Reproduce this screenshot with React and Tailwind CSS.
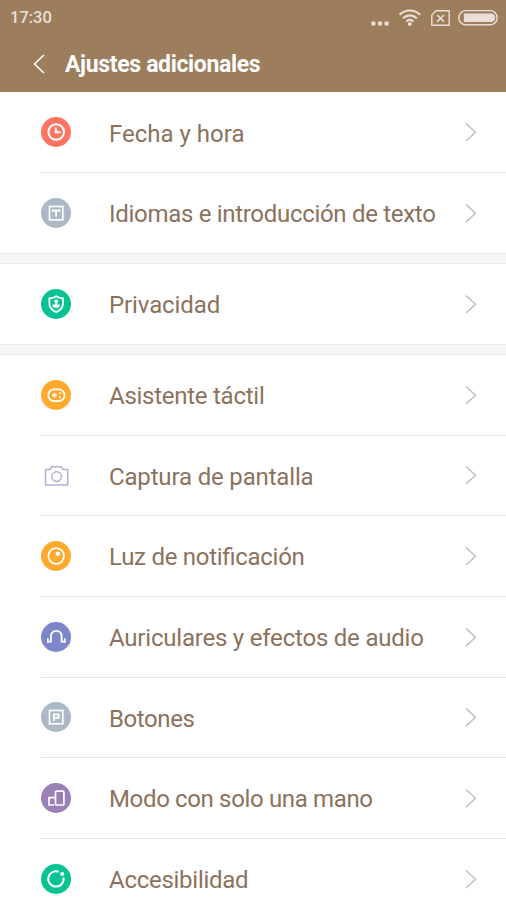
/**
 * Additional settings screen - status bar, title bar and grouped list
 */
import React from 'react';

// Every glyph is drawn on the same 30px disc
function Disc({ color, children }) {
  return (
    <svg width="30" height="30" viewBox="0 0 30 30" fill="none" stroke="#fff" strokeWidth="2">
      <circle cx="15" cy="15" r="15" fill={color} stroke="none" />
      {children}
    </svg>
  );
}

const ClockIcon = () => (
  <Disc color="#fb7562">
    <circle cx="15.2" cy="15" r="7.8" />
    <path d="M14.8 10.5V15.3H19.5" />
  </Disc>
);

const TextIcon = () => (
  <Disc color="#abb8c6">
    <rect x="8.5" y="8.5" width="13.3" height="13.3" strokeWidth="1.7" />
    <path d="M11.8 14V12.4H18.4V14M15.1 12.4V18.8" strokeWidth="1.8" />
  </Disc>
);

const ShieldIcon = () => (
  <Disc color="#06c294">
    <path d="M15.2 7.2C17.3 8.6 19.5 9.2 22 9.4V14.5C22 18.8 19 21.5 15.2 23.2C11.4 21.5 8.4 18.8 8.4 14.5V9.4C10.9 9.2 13.1 8.6 15.2 7.2Z" strokeWidth="1.8" />
    <circle cx="15.2" cy="12.2" r="1.9" fill="#fff" stroke="none" />
    <path d="M14.2 13H16.2V15.6H18.8V17.5L17.4 18.8H13L11.6 17.5V15.6H14.2Z" fill="#fff" stroke="none" />
  </Disc>
);

const GamepadIcon = () => (
  <Disc color="#ffa92f">
    <rect x="7.3" y="9.4" width="16.2" height="11.6" rx="5.6" strokeWidth="1.8" />
    <path d="M11 15.2H16M13.5 12.7V17.7" strokeWidth="1.7" />
    <circle cx="19" cy="13.2" r="1" fill="#fff" stroke="none" />
    <circle cx="19" cy="17.2" r="1" fill="#fff" stroke="none" />
  </Disc>
);

const CameraIcon = () => (
  <svg width="30" height="30" viewBox="0 0 30 30" fill="none" stroke="#b9aad3" strokeWidth="1.5">
    <path d="M4.5 9.5H9L10.6 6.8H20.6L22.2 9.5H26.7V25.1H4.5Z" strokeLinejoin="round" />
    <circle cx="15.6" cy="16.6" r="4.8" />
  </svg>
);

const LightIcon = () => (
  <Disc color="#ffa92f">
    <circle cx="15.2" cy="15" r="7.8" strokeWidth="1.8" />
    <circle cx="16.8" cy="12.8" r="2.3" fill="#fff" stroke="none" />
  </Disc>
);

const HeadphonesIcon = () => (
  <Disc color="#7c86c8">
    <path d="M6.8 20.5V16.2M23.8 20.5V16.2" strokeWidth="1.6" />
    <path d="M6 19.7H10V14.5C10 11 12 8.9 15.3 8.9C18.6 8.9 20.6 11 20.6 14.5V19.7H24.6" strokeWidth="1.8" />
  </Disc>
);

const ButtonsIcon = () => (
  <Disc color="#abb8c6">
    <rect x="8.5" y="8.5" width="13.3" height="13.3" strokeWidth="1.7" />
    <path d="M13 19V12.4H17.6V15.9H13" strokeWidth="1.8" />
  </Disc>
);

const OneHandIcon = () => (
  <Disc color="#9a80b6">
    <rect x="14.5" y="8.2" width="8.4" height="13.8" rx="1" strokeWidth="1.7" />
    <path d="M14.5 14.7H8V22H13" strokeWidth="1.7" />
  </Disc>
);

const AccessibilityIcon = () => (
  <Disc color="#06c294">
    <path d="M17.6 7.7A7.7 7.7 0 1 0 22.5 13.5" />
    <circle cx="21.2" cy="10" r="2.1" fill="#fff" stroke="none" />
  </Disc>
);

const GROUPS = [
  {
    rowHeight: 'h-[80.5px]',
    items: [
      { id: 'date', label: 'Fecha y hora', icon: ClockIcon, text: 'pt-1 tracking-normal' },
      { id: 'language', label: 'Idiomas e introducción de texto', icon: TextIcon, text: 'pt-[3px] tracking-[-0.3px]' },
    ],
  },
  {
    rowHeight: 'h-20',
    items: [{ id: 'privacy', label: 'Privacidad', icon: ShieldIcon, text: 'pt-px tracking-[-0.1px]' }],
  },
  {
    rowHeight: 'h-[80.67px]',
    items: [
      { id: 'touch', label: 'Asistente táctil', icon: GamepadIcon, text: 'pt-[3px] tracking-[-0.26px]' },
      { id: 'screenshot', label: 'Captura de pantalla', icon: CameraIcon, text: 'pt-[3px] tracking-[-0.16px]' },
      { id: 'led', label: 'Luz de notificación', icon: LightIcon, text: 'pt-0.5 tracking-[-0.28px]' },
      { id: 'audio', label: 'Auriculares y efectos de audio', icon: HeadphonesIcon, text: 'pt-[3px] tracking-[-0.21px]' },
      { id: 'buttons', label: 'Botones', icon: ButtonsIcon, text: 'pt-[3px] tracking-[-0.4px]' },
      { id: 'one-hand', label: 'Modo con solo una mano', icon: OneHandIcon, text: 'pt-px tracking-[-0.35px]' },
      { id: 'accessibility', label: 'Accesibilidad', icon: AccessibilityIcon, text: 'pt-px tracking-[-0.27px]' },
    ],
  },
];

function StatusBar() {
  return (
    <div className="flex h-9 items-center justify-between pl-2.5 pr-2 text-[#e9dfd8]">
      <span className="pt-px text-[16.5px] font-medium leading-none">17:30</span>
      <svg width="128" height="24" viewBox="370 6 128 24" fill="none" stroke="currentColor">
        <g fill="currentColor" stroke="none">
          <circle cx="373.4" cy="23.5" r="2.3" />
          <circle cx="380" cy="23.5" r="2.3" />
          <circle cx="386.6" cy="23.5" r="2.3" />
          <circle cx="409.8" cy="24" r="2" />
        </g>
        {/* Wifi */}
        <path d="M399.5 14.8C405.5 9 414.2 9 420.2 14.8M402.9 18.3C407 14.4 412.7 14.4 416.8 18.3M406.2 21.5C408.4 19.6 411.3 19.6 413.5 21.5" strokeWidth="2.1" />
        {/* No SIM */}
        <path d="M436 10.8H449.2V25.2H431.8V15Z" strokeWidth="1.4" />
        <path d="M437.2 15L444 21.6M444 15L437.2 21.6" strokeWidth="1.6" />
        {/* Battery */}
        <rect x="458.8" y="10.6" width="38.4" height="14.2" rx="7.1" strokeWidth="1.4" />
        <path d="M463.8 13.5H491A4.2 4.2 0 0 1 491 22H463.8Z" fill="currentColor" stroke="none" />
      </svg>
    </div>
  );
}

function Row({ item, height, last }) {
  const Icon = item.icon;
  return (
    <li className={`flex pl-[41px] ${height}`}>
      <div className={`flex flex-1 items-center ${last ? '' : 'border-b border-[#e4e4e4]'}`}>
        <Icon />
        <span
          className={`ml-[38px] flex-1 whitespace-nowrap text-[24px] leading-7 [font-feature-settings:'liga'_1] ${item.text}`}
        >
          {item.label}
        </span>
        <svg className="mr-[29px]" width="12" height="20" viewBox="0 0 12 20" fill="none" stroke="#c9bab0" strokeWidth="1.4">
          <path d="M1 1.5L10.5 10.3L1 19" />
        </svg>
      </div>
    </li>
  );
}

export default function App() {
  return (
    <div className="h-[900px] w-[506px] overflow-hidden bg-[#f6f6f6] font-[Roboto,sans-serif] text-[#8c725c]">
      <header className="h-[92px] bg-[#9c7e5c]">
        <StatusBar />
        <div className="flex h-14 items-center pl-[33px] text-white">
          <svg width="12" height="20" viewBox="0 0 12 20" fill="none" stroke="currentColor" strokeWidth="1.6">
            <path d="M11 1L1.5 10L11 19" />
          </svg>
          <h1 className="ml-5 whitespace-nowrap pt-0.5 text-[23px] font-bold leading-7 tracking-[-0.34px]">
            Ajustes adicionales
          </h1>
        </div>
      </header>

      <main className="flex flex-col gap-[9px]">
        {GROUPS.map(({ rowHeight, items }, i) => (
          <ul
            key={items[0].id}
            className={`shrink-0 border-b border-[#e8e8e8] bg-white ${i === 0 ? '' : 'border-t'}`}
          >
            {items.map((item, j) => (
              <Row key={item.id} item={item} height={rowHeight} last={j === items.length - 1} />
            ))}
          </ul>
        ))}
      </main>
    </div>
  );
}
